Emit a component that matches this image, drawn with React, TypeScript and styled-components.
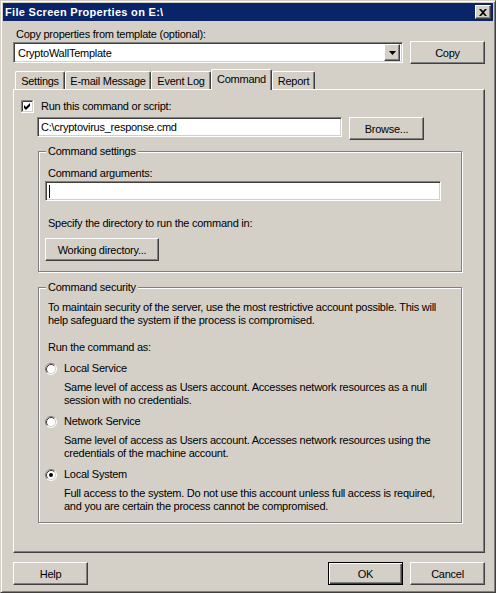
import styled, { createGlobalStyle, css } from "styled-components";

const face = "#D4D0C8";
const shadow = "#808080";
const darkShadow = "#404040";

const GlobalStyle = createGlobalStyle`
  html, body {
    margin: 0;
    padding: 0;
    background: ${face};
  }
  body {
    font-family: "Liberation Sans", Arial, sans-serif;
    font-size: 11px;
    letter-spacing: -0.25px;
    color: #000;
  }
`;

const raised = css`
  border: 1px solid;
  border-color: #fff ${darkShadow} ${darkShadow} #fff;
  box-shadow: inset -1px -1px 0 ${shadow};
`;

const sunken = css`
  border: 1px solid;
  border-color: ${shadow} #fff #fff ${shadow};
  box-shadow: inset 1px 1px 0 ${darkShadow}, inset -1px -1px 0 ${face};
`;

const CheckBox = ({ checked }: { checked: boolean }) => (
  <svg width="13" height="13" viewBox="0 0 13 13">
    <rect x="0" y="0" width="13" height="13" fill="#fff" />
    <path d="M0.5 12V0.5H12" stroke={shadow} fill="none" />
    <path d="M1.5 11V1.5H11" stroke={darkShadow} fill="none" />
    <path d="M0 12.5H12.5V0" stroke="#fff" fill="none" />
    <path d="M1 11.5H11.5V1" stroke={face} fill="none" />
    {checked && <polygon points="3,5 5,7 9,3 9,6 5,10 3,8" fill="#000" />}
  </svg>
);

const Radio = ({ checked }: { checked: boolean }) => (
  <svg width="12" height="12" viewBox="0 0 12 12">
    <circle cx="6" cy="6" r="5" fill="#fff" />
    <path d="M2.11 9.89A5.5 5.5 0 0 1 9.89 2.11" stroke={shadow} fill="none" />
    <path d="M2.82 9.18A4.5 4.5 0 0 1 9.18 2.82" stroke={darkShadow} fill="none" />
    <path d="M9.89 2.11A5.5 5.5 0 0 1 2.11 9.89" stroke="#fff" fill="none" />
    <path d="M9.18 2.82A4.5 4.5 0 0 1 2.82 9.18" stroke={face} fill="none" />
    {checked && <circle cx="6" cy="6" r="2" fill="#000" />}
  </svg>
);

const tabs = [
  { label: "Settings", w: 50 },
  { label: "E-mail Message", w: 86 },
  { label: "Event Log", w: 60 },
  { label: "Command", w: 61 },
  { label: "Report", w: 43 },
];

const accounts = [
  {
    name: "Local Service",
    lines: [
      "Same level of access as Users account. Accesses network resources as a null",
      "session with no credentials.",
    ],
    checked: false,
  },
  {
    name: "Network Service",
    lines: [
      "Same level of access as Users account. Accesses network resources using the",
      "credentials of the machine account.",
    ],
    checked: false,
  },
  {
    name: "Local System",
    lines: [
      "Full access to the system. Do not use this account unless full access is required,",
      "and you are certain the process cannot be compromised.",
    ],
    checked: true,
  },
];

export default function App() {
  return (
    <>
      <GlobalStyle />
      <Window>
        <TitleBar>
          <TitleText>File Screen Properties on E:\</TitleText>
          <CloseButton>
            <svg width="8" height="7" viewBox="0 0 8 7">
              <path d="M0 0h2l2 2 2-2h2L5 3.5 8 7H6L4 5 2 7H0l3-3.5z" fill="#000" />
            </svg>
          </CloseButton>
        </TitleBar>
        <Body>
          <TopLabel>Copy properties from template (optional):</TopLabel>
          <TemplateRow>
            <Combo>
              <ComboText>CryptoWallTemplate</ComboText>
              <DropButton>
                <svg width="7" height="4" viewBox="0 0 7 4">
                  <path d="M0 0h7L3.5 4z" fill="#000" />
                </svg>
              </DropButton>
            </Combo>
            <Button $w={75} $h={23}>Copy</Button>
          </TemplateRow>

          <TabStrip>
            {tabs.map((t) => (
              <Tab key={t.label} $w={t.w} $active={t.label === "Command"}>
                {t.label}
              </Tab>
            ))}
          </TabStrip>
          <Panel>
            <CheckRow>
              <CheckBox checked />
              <span>Run this command or script:</span>
            </CheckRow>
            <PathRow>
              <TextBox $w={305}>C:\cryptovirus_response.cmd</TextBox>
              <Button $w={75} $h={23}>Browse...</Button>
            </PathRow>

            <Group $top={5}>
              <Legend>Command settings</Legend>
              <GroupText $top={9}>Command arguments:</GroupText>
              <TextBox $w={396} $top={1}>
                <Caret />
              </TextBox>
              <GroupText $top={16}>Specify the directory to run the command in:</GroupText>
              <Button $w={114} $h={23} $top={8}>Working directory...</Button>
            </Group>

            <Group $top={9} $bottom={9}>
              <Legend>Command security</Legend>
              <GroupText $top={7}>
                To maintain security of the server, use the most restrictive account possible. This will
                <br />
                help safeguard the system if the process is compromised.
              </GroupText>
              <GroupText $top={14}>Run the command as:</GroupText>
              {accounts.map((a) => (
                <div key={a.name}>
                  <RadioRow>
                    <Radio checked={a.checked} />
                    <span>{a.name}</span>
                  </RadioRow>
                  <RadioDesc>
                    {a.lines[0]}
                    <br />
                    {a.lines[1]}
                  </RadioDesc>
                </div>
              ))}
            </Group>
          </Panel>

          <ButtonBar>
            <Button $w={75} $h={23}>Help</Button>
            <Spacer />
            <Button $w={75} $h={23} $default>OK</Button>
            <Button $w={75} $h={23}>Cancel</Button>
          </ButtonBar>
        </Body>
      </Window>
    </>
  );
}

// Styled Components
const Window = styled.div`
  width: 496px;
  height: 593px;
  box-sizing: border-box;
  background: ${face};
  border: 1px solid;
  border-color: ${face} ${darkShadow} ${darkShadow} ${face};
  box-shadow: inset 1px 1px 0 #fff, inset -1px -1px 0 ${shadow};
  padding: 2px;
  display: flex;
  flex-direction: column;
`;

const TitleBar = styled.div`
  height: 18px;
  background: #0a246a;
  display: flex;
  align-items: center;
  justify-content: space-between;
  padding: 0 2px 0 2px;
`;

const TitleText = styled.div`
  color: #fff;
  font-weight: bold;
  font-size: 11px;
  letter-spacing: 0.3px;
  white-space: nowrap;
`;

const CloseButton = styled.div`
  width: 16px;
  height: 14px;
  box-sizing: border-box;
  background: ${face};
  ${raised};
  display: flex;
  align-items: center;
  justify-content: center;
`;

const Body = styled.div`
  padding: 0 8px 0 10px;
  display: flex;
  flex-direction: column;
`;

const TopLabel = styled.div`
  margin-top: 7px;
  padding-left: 3px;
  line-height: 13px;
  white-space: nowrap;
`;

const TemplateRow = styled.div`
  display: flex;
  align-items: center;
  gap: 7px;
`;

const Combo = styled.div`
  width: 390px;
  height: 21px;
  box-sizing: border-box;
  background: #fff;
  ${sunken};
  display: flex;
  align-items: center;
  padding: 2px;
`;

const ComboText = styled.div`
  flex: 1;
  padding-left: 2px;
`;

const DropButton = styled.div`
  width: 16px;
  height: 17px;
  box-sizing: border-box;
  background: ${face};
  ${raised};
  display: flex;
  align-items: center;
  justify-content: center;
`;

const Button = styled.div<{ $w: number; $h: number; $top?: number; $default?: boolean }>`
  width: ${(p) => p.$w}px;
  height: ${(p) => p.$h}px;
  margin-top: ${(p) => p.$top ?? 0}px;
  box-sizing: border-box;
  background: ${face};
  display: flex;
  align-items: center;
  justify-content: center;
  flex-shrink: 0;
  white-space: nowrap;
  ${(p) =>
    p.$default
      ? css`
          border: 1px solid #000;
          box-shadow: inset 1px 1px 0 #fff, inset -1px -1px 0 ${darkShadow},
            inset -2px -2px 0 ${shadow};
        `
      : raised};
`;

const TabStrip = styled.div`
  margin-top: 5px;
  padding-left: 2px;
  height: 20px;
  display: flex;
  align-items: flex-end;
  position: relative;
  z-index: 1;
`;

const Tab = styled.div<{ $w: number; $active: boolean }>`
  width: ${(p) => p.$w}px;
  height: ${(p) => (p.$active ? 21 : 18)}px;
  margin-bottom: ${(p) => (p.$active ? -1 : 0)}px;
  box-sizing: border-box;
  background: ${face};
  border-top: 1px solid #fff;
  border-left: 1px solid #fff;
  border-right: 1px solid ${darkShadow};
  box-shadow: inset -1px 0 0 ${shadow};
  border-top-left-radius: 2px;
  border-top-right-radius: 2px;
  display: flex;
  align-items: ${(p) => (p.$active ? "flex-start" : "center")};
  padding-top: ${(p) => (p.$active ? 3 : 0)}px;
  justify-content: center;
  white-space: nowrap;
`;

const Panel = styled.div`
  width: 472px;
  height: 464px;
  box-sizing: border-box;
  border: 1px solid;
  border-color: #fff ${darkShadow} ${darkShadow} #fff;
  box-shadow: inset -1px -1px 0 ${shadow};
  display: flex;
  flex-direction: column;
`;

const CheckRow = styled.div`
  margin: 10px 0 0 7px;
  height: 13px;
  display: flex;
  align-items: center;
  gap: 7px;
  line-height: 13px;
`;

const PathRow = styled.div`
  margin: 4px 0 0 23px;
  display: flex;
  align-items: flex-start;
  gap: 7px;
`;

const TextBox = styled.div<{ $w: number; $top?: number }>`
  width: ${(p) => p.$w}px;
  height: 20px;
  margin-top: ${(p) => p.$top ?? 0}px;
  box-sizing: border-box;
  background: #fff;
  ${sunken};
  display: flex;
  align-items: center;
  padding-left: 3px;
  white-space: nowrap;
`;

const Caret = styled.div`
  width: 1px;
  height: 13px;
  background: #000;
`;

const Group = styled.fieldset<{ $top?: number; $bottom?: number }>`
  margin: ${(p) => p.$top ?? 7}px 0 0 24px;
  width: 424px;
  box-sizing: border-box;
  padding: 0 0 ${(p) => p.$bottom ?? 10}px 6px;
  border: 1px solid ${shadow};
  box-shadow: inset 1px 1px 0 #fff, 1px 1px 0 #fff;
  display: flex;
  flex-direction: column;
  align-items: flex-start;
  min-width: 0;
`;

const Legend = styled.legend`
  padding: 0 2px;
  margin-left: 1px;
  line-height: 13px;
  background: ${face};
`;

const GroupText = styled.div<{ $top: number }>`
  margin-top: ${(p) => p.$top}px;
  padding-left: 3px;
  line-height: 13px;
  white-space: nowrap;
`;

const RadioRow = styled.div`
  margin-top: 8px;
  height: 13px;
  display: flex;
  align-items: center;
  gap: 7px;
  line-height: 13px;
`;

const RadioDesc = styled.div`
  margin-top: 6px;
  padding-left: 19px;
  line-height: 13px;
  white-space: nowrap;
`;

const ButtonBar = styled.div`
  margin-top: 9px;
  display: flex;
  gap: 7px;
`;

const Spacer = styled.div`
  flex: 1;
`;
